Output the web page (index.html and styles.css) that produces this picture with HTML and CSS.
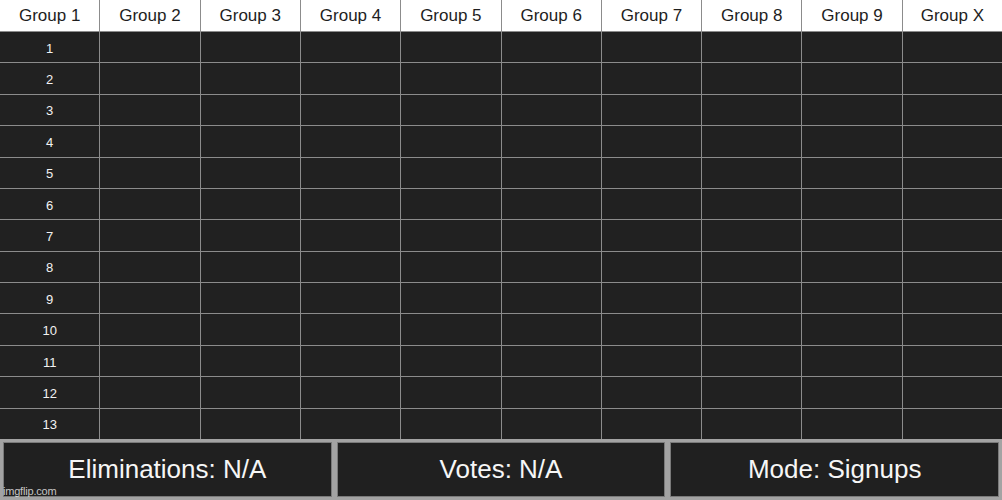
FILE: index.html
```html
<!DOCTYPE html>
<html>
<head>
<meta charset="utf-8">
<link rel="stylesheet" href="styles.css">
</head>
<body>
<div class="page">
  <div class="grid" id="grid">
    <div class="head">Group 1</div>
    <div class="head">Group 2</div>
    <div class="head">Group 3</div>
    <div class="head">Group 4</div>
    <div class="head">Group 5</div>
    <div class="head">Group 6</div>
    <div class="head">Group 7</div>
    <div class="head">Group 8</div>
    <div class="head">Group 9</div>
    <div class="head">Group X</div>
    <div class="num">1</div><div class="cell"></div><div class="cell"></div><div class="cell"></div><div class="cell"></div><div class="cell"></div><div class="cell"></div><div class="cell"></div><div class="cell"></div><div class="cell"></div>
    <div class="num">2</div><div class="cell"></div><div class="cell"></div><div class="cell"></div><div class="cell"></div><div class="cell"></div><div class="cell"></div><div class="cell"></div><div class="cell"></div><div class="cell"></div>
    <div class="num">3</div><div class="cell"></div><div class="cell"></div><div class="cell"></div><div class="cell"></div><div class="cell"></div><div class="cell"></div><div class="cell"></div><div class="cell"></div><div class="cell"></div>
    <div class="num">4</div><div class="cell"></div><div class="cell"></div><div class="cell"></div><div class="cell"></div><div class="cell"></div><div class="cell"></div><div class="cell"></div><div class="cell"></div><div class="cell"></div>
    <div class="num">5</div><div class="cell"></div><div class="cell"></div><div class="cell"></div><div class="cell"></div><div class="cell"></div><div class="cell"></div><div class="cell"></div><div class="cell"></div><div class="cell"></div>
    <div class="num">6</div><div class="cell"></div><div class="cell"></div><div class="cell"></div><div class="cell"></div><div class="cell"></div><div class="cell"></div><div class="cell"></div><div class="cell"></div><div class="cell"></div>
    <div class="num">7</div><div class="cell"></div><div class="cell"></div><div class="cell"></div><div class="cell"></div><div class="cell"></div><div class="cell"></div><div class="cell"></div><div class="cell"></div><div class="cell"></div>
    <div class="num">8</div><div class="cell"></div><div class="cell"></div><div class="cell"></div><div class="cell"></div><div class="cell"></div><div class="cell"></div><div class="cell"></div><div class="cell"></div><div class="cell"></div>
    <div class="num">9</div><div class="cell"></div><div class="cell"></div><div class="cell"></div><div class="cell"></div><div class="cell"></div><div class="cell"></div><div class="cell"></div><div class="cell"></div><div class="cell"></div>
    <div class="num">10</div><div class="cell"></div><div class="cell"></div><div class="cell"></div><div class="cell"></div><div class="cell"></div><div class="cell"></div><div class="cell"></div><div class="cell"></div><div class="cell"></div>
    <div class="num">11</div><div class="cell"></div><div class="cell"></div><div class="cell"></div><div class="cell"></div><div class="cell"></div><div class="cell"></div><div class="cell"></div><div class="cell"></div><div class="cell"></div>
    <div class="num">12</div><div class="cell"></div><div class="cell"></div><div class="cell"></div><div class="cell"></div><div class="cell"></div><div class="cell"></div><div class="cell"></div><div class="cell"></div><div class="cell"></div>
    <div class="num">13</div><div class="cell"></div><div class="cell"></div><div class="cell"></div><div class="cell"></div><div class="cell"></div><div class="cell"></div><div class="cell"></div><div class="cell"></div><div class="cell"></div>
  </div>
  <div class="footer">
    <div class="panel">Eliminations: N/A</div>
    <div class="panel">Votes: N/A</div>
    <div class="panel">Mode: Signups</div>
  </div>
  <div class="watermark">imgflip.com</div>
</div>
</body>
</html>
```

FILE: styles.css
```css
* { box-sizing: border-box; }
html, body {
  margin: 0;
  padding: 0;
  background: #a3a3a3;
}
body {
  width: 1002px;
  height: 500px;
  overflow: hidden;
  font-family: "Liberation Sans", Arial, sans-serif;
}
.page {
  position: relative;
  width: 1002px;
  height: 500px;
  display: flex;
  flex-direction: column;
}
.grid {
  height: 439px;
  flex: none;
  display: grid;
  grid-template-columns: repeat(10, 1fr);
  grid-template-rows: 31px repeat(13, 1fr);
  gap: 1px;
  background: #8c8c8c;
}
.head {
  background: #ffffff;
  color: #1e1e1e;
  font-size: 17px;
  display: flex;
  align-items: center;
  justify-content: center;
  padding-top: 1px;
}
.num {
  background: #212121;
  color: #f2f2f2;
  font-size: 13px;
  display: flex;
  align-items: center;
  justify-content: center;
  padding-top: 2px;
}
.cell {
  background: #212121;
}
.footer {
  flex: 1;
  display: flex;
  gap: 5px;
  padding: 3px 3px 3px 3px;
  background: #a3a3a3;
}
.panel {
  flex: 1;
  background: #202020;
  border: 1px solid #7a7a7a;
  color: #f6f6f6;
  font-size: 26px;
  display: flex;
  align-items: center;
  justify-content: center;
}
.watermark {
  position: absolute;
  left: 3px;
  bottom: 3px;
  font-size: 11px;
  color: rgba(255, 255, 255, 0.75);
  letter-spacing: -0.2px;
}
```
